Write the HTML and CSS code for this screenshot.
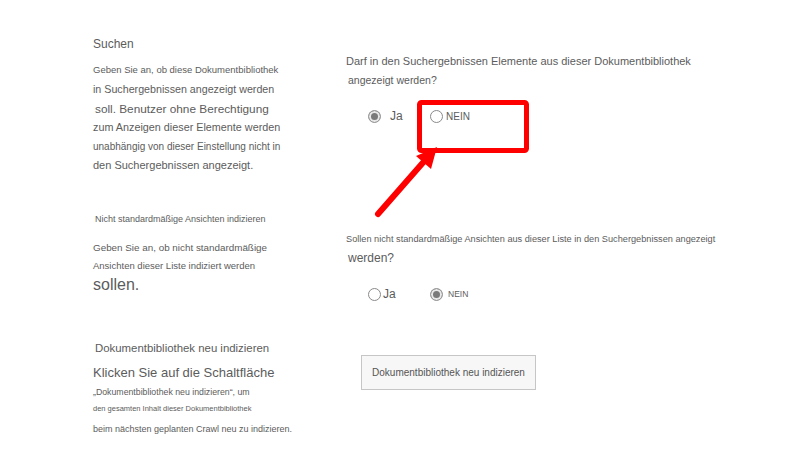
FILE: index.html
```html
<!DOCTYPE html>
<html>

<head>
    <meta charset="UTF-8">
    <meta name="viewport" content="width=device-width, initial-scale=1.0">
    <title>Suche - Einstellungen</title>
    <link rel="stylesheet" href="styles.css">
</head>

<body>
    <div class="settings">
        <!-- Suchen -->
        <div class="section-info row-1">
            <div class="section-title">Suchen</div>
            <div class="desc">
                <div class="line s95">Geben Sie an, ob diese Dokumentbibliothek</div>
                <div class="line s107 tall">in Suchergebnissen angezeigt werden</div>
                <div class="line s118 short indent">soll. Benutzer ohne Berechtigung</div>
                <div class="line s108">zum Anzeigen dieser Elemente werden</div>
                <div class="line s10">unabhängig von dieser Einstellung nicht in</div>
                <div class="line s11">den Suchergebnissen angezeigt.</div>
            </div>
        </div>
        <div class="section-control row-1">
            <div class="question">
                <div class="line s11">Darf in den Suchergebnissen Elemente aus dieser Dokumentbibliothek</div>
                <div class="line s105 indent">angezeigt werden?</div>
            </div>
            <div class="radio-row">
                <label class="radio first">
                    <span class="dot checked"></span><span class="label-ja wide">Ja</span>
                </label>
                <label class="radio">
                    <span class="dot"></span><span class="label-nein large">NEIN</span>
                </label>
            </div>
        </div>

        <!-- Nicht standardmäßige Ansichten -->
        <div class="section-info row-2">
            <div class="line s9 indent">Nicht standardmäßige Ansichten indizieren</div>
            <div class="desc desc-2">
                <div class="line s985">Geben Sie an, ob nicht standardmäßige</div>
                <div class="line s95">Ansichten dieser Liste indiziert werden</div>
                <div class="line s16 big">sollen.</div>
            </div>
        </div>
        <div class="section-control row-2">
            <div class="question">
                <div class="line s92">Sollen nicht standardmäßige Ansichten aus dieser Liste in den Suchergebnissen angezeigt</div>
                <div class="line s12 indent">werden?</div>
            </div>
            <div class="radio-row">
                <label class="radio first">
                    <span class="dot"></span><span class="label-ja">Ja</span>
                </label>
                <label class="radio">
                    <span class="dot checked"></span><span class="label-nein spaced">NEIN</span>
                </label>
            </div>
        </div>

        <!-- Neu indizieren -->
        <div class="section-info row-3">
            <div class="line s114 title-3 indent">Dokumentbibliothek neu indizieren</div>
            <div class="line s13 click">Klicken Sie auf die Schaltfläche</div>
            <div class="line s875 l18">„Dokumentbibliothek neu indizieren“, um</div>
            <div class="line s75 l16">den gesamten Inhalt dieser Dokumentbibliothek</div>
            <div class="line s9 last">beim nächsten geplanten Crawl neu zu indizieren.</div>
        </div>
        <div class="section-control row-3">
            <button class="reindex-button">Dokumentbibliothek neu indizieren</button>
        </div>
    </div>

    <!-- Markierung -->
    <svg class="annotation" width="800" height="462" viewBox="0 0 800 462">
        <rect x="419.5" y="102.5" width="107" height="48" rx="2" fill="none" stroke="#ff0000" stroke-width="5" />
        <line x1="378" y1="214" x2="427" y2="158" stroke="#ff0000" stroke-width="6" stroke-linecap="round" />
        <polygon points="437,147 431,169 416,156" fill="#ff0000" />
    </svg>
</body>

</html>
```

FILE: styles.css
```css
body {
    font-family: "Liberation Sans", Arial, sans-serif;
    color: #5c5c5c;
    background-color: #fff;
    margin: 0;
    padding: 0;
    position: relative;
    width: 800px;
    height: 462px;
    overflow: hidden;
}

.settings {
    display: grid;
    grid-template-columns: 253px 1fr;
    grid-template-rows: 176px 126px auto;
    padding: 34px 0 0 93px;
}

.line {
    white-space: nowrap;
    line-height: 19px;
}

.indent {
    padding-left: 2px;
}

/* font sizes */
.s75 { font-size: 7.5px; }
.s875 { font-size: 8.75px; }
.s9 { font-size: 9px; }
.s92 { font-size: 9.2px; }
.s95 { font-size: 9.5px; }
.s985 { font-size: 9.85px; }
.s10 { font-size: 10px; }
.s105 { font-size: 10.5px; }
.s107 { font-size: 10.7px; }
.s108 { font-size: 10.8px; }
.s11 { font-size: 11px; }
.s114 { font-size: 11.4px; }
.s118 { font-size: 11.8px; }
.s12 { font-size: 12px; }
.s13 { font-size: 13px; }
.s16 { font-size: 16px; }

.tall { line-height: 21px; }
.short { line-height: 18px; }

.section-title {
    font-size: 12px;
    line-height: 20px;
}

.desc {
    margin-top: 6px;
}

.desc-2 {
    margin-top: 10px;
}

.desc-2 .line {
    line-height: 18px;
}

.desc-2 .big {
    line-height: 20px;
}

/* right column */
.section-control {
    padding-top: 18px;
}

.section-control.row-2 {
    padding-top: 20px;
}

.section-control.row-3 {
    padding-top: 19px;
}

.radio-row {
    display: flex;
    align-items: center;
    height: 20px;
    margin-top: 16px;
    padding-left: 22px;
}

.radio {
    display: flex;
    align-items: center;
}

.radio.first {
    width: 62px;
}

.dot {
    box-sizing: border-box;
    width: 13px;
    height: 13px;
    border: 1.5px solid #8a8a8a;
    border-radius: 50%;
    background-color: #fff;
}

.dot.checked {
    border-color: #9a9a9a;
    background-color: #7a7a7a;
    box-shadow: inset 0 0 0 2px #e8e8e8;
}

.label-ja {
    font-size: 12px;
    margin-left: 2px;
}

.label-ja.wide {
    margin-left: 9px;
}

.label-nein {
    font-size: 8.5px;
    margin-left: 3px;
}

.label-nein.large {
    font-size: 10px;
}

.label-nein.spaced {
    margin-left: 5px;
}

/* third section */
.title-3 {
    padding-top: 2px;
    line-height: 20px;
}

.click {
    margin-top: 5px;
    line-height: 20px;
}

.l18 {
    line-height: 18px;
}

.l16 {
    line-height: 16px;
}

.last {
    margin-top: 2px;
    line-height: 20px;
}

.reindex-button {
    margin-left: 15px;
    width: 175px;
    height: 35px;
    background-color: #f7f7f7;
    border: 1px solid #c6c6c6;
    border-radius: 0;
    font-family: "Liberation Sans", Arial, sans-serif;
    font-size: 10px;
    color: #555;
    cursor: pointer;
}

.annotation {
    position: absolute;
    left: 0;
    top: 0;
    pointer-events: none;
}
```
